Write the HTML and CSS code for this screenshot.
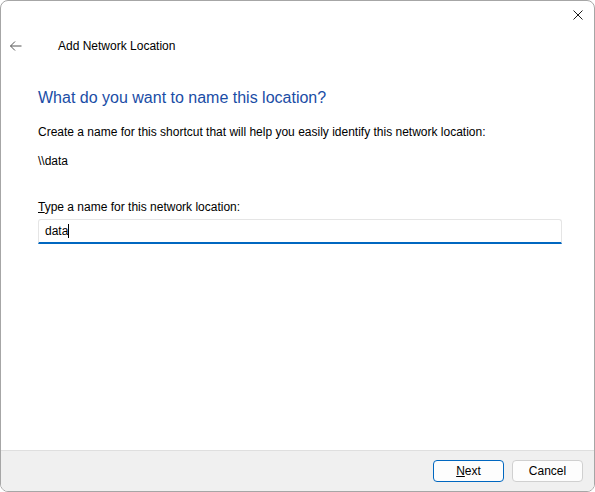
FILE: index.html
```html
<!DOCTYPE html>
<html>
<head>
<meta charset="utf-8">
<link rel="stylesheet" href="styles.css">
</head>
<body>
<div class="window">
  <div class="titlebar">
    <svg class="close" width="10" height="10" viewBox="0 0 10 10"><path d="M0.5 0.5 L9.5 9.5 M9.5 0.5 L0.5 9.5" stroke="#1a1a1a" stroke-width="1" fill="none"/></svg>
  </div>
  <div class="header">
    <svg class="back" width="12" height="10" viewBox="0 0 12 10"><path d="M0.5 5 H11.5 M5 0.5 L0.5 5 L5 9.5" stroke="#555" stroke-width="1" fill="none"/></svg>
    <span class="wtitle">Add Network Location</span>
  </div>
  <div class="content">
    <h1 class="instr">What do you want to name this location?</h1>
    <p class="text">Create a name for this shortcut that will help you easily identify this network location:</p>
    <p class="text path">\\data</p>
    <label class="label"><u>T</u>ype a name for this network location:</label>
    <div class="input"><span class="val">data</span><span class="caret"></span></div>
  </div>
  <div class="footer">
    <button class="btn primary"><u>N</u>ext</button>
    <button class="btn">Cancel</button>
  </div>
</div>
</body>
</html>
```
FILE: styles.css
```css
html, body { margin: 0; padding: 0; background: #fff; }
body { font-family: "Liberation Sans", Arial, sans-serif; font-size: 12px; color: #000; }
.window {
  width: 595px; height: 492px; box-sizing: border-box;
  border: 1px solid #a6a6a6; border-radius: 8px; overflow: hidden;
  display: flex; flex-direction: column; background: #fff;
}
.titlebar { height: 30px; display: flex; justify-content: flex-end; align-items: center; padding-right: 11px; }
.close { display: block; margin-top: -2px; }
.header { height: 30px; display: flex; align-items: center; }
.back { margin-left: 9px; margin-right: 36px; }
.wtitle { font-size: 12px; color: #000; }
.content { flex: 1; padding: 0 32px 0 37px; }
.instr { margin: 26px 0 0 0; font-size: 16px; font-weight: normal; color: #1a4da6; line-height: 22px; }
.text { margin: 15px 0 0 0; line-height: 16px; }
.path { margin-top: 13px; }
.label { display: block; margin-top: 30px; line-height: 16px; }
.input {
  margin-top: 4px; height: 25px; box-sizing: border-box;
  border: 1px solid #e5e5e5; border-bottom: 2px solid #0067c0; border-radius: 3px 3px 0 0;
  display: flex; align-items: center; padding-left: 6px;
}
.caret { display: inline-block; width: 1px; height: 14px; background: #000; }
.footer {
  height: 41px; box-sizing: border-box; border-top: 1px solid #dfdfdf; background: #f0f0f0;
  display: flex; justify-content: flex-end; align-items: center; gap: 8px; padding-right: 11px;
}
.btn {
  width: 71px; height: 22px; box-sizing: border-box; font-family: inherit; font-size: 12px;
  background: #fdfdfd; border: 1px solid #d0d0d0; border-radius: 4px; color: #000; padding: 0;
}
.btn.primary { border-color: #0067c0; }
```
